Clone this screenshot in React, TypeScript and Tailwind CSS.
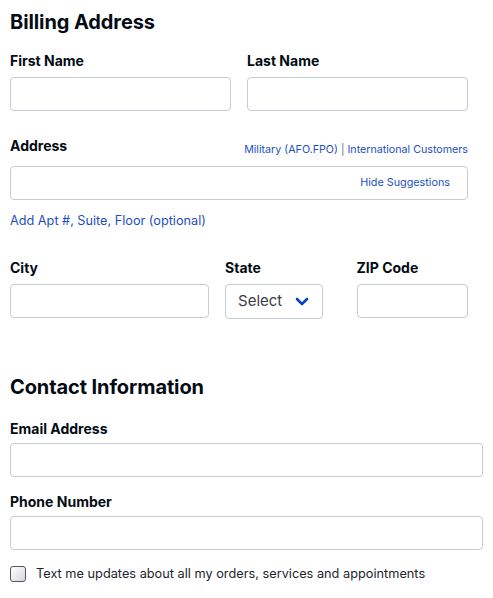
export default function App() {
  const input =
    "block h-[34px] w-full rounded-[4px] border border-[#c5cbd5] bg-white";
  const label = "block text-[14px] leading-[20px] font-bold text-[#040c13]";

  return (
    <div
      className="min-h-screen bg-white pl-[10px] pt-[10px] text-[#040c13]"
      style={{ fontFamily: "Inter, 'Liberation Sans', sans-serif" }}
    >
      <h2 className="text-[20px] leading-[24px] font-bold tracking-[-0.1px]">
        Billing Address
      </h2>

      <div className="mt-[17px] flex w-[458px] gap-[16px]">
        <div className="flex-1">
          <label className={label}>First Name</label>
          <div className={`${input} mt-[6px]`} />
        </div>
        <div className="flex-1">
          <label className={label}>Last Name</label>
          <div className={`${input} mt-[6px]`} />
        </div>
      </div>

      <div className="mt-[25px] w-[458px]">
        <div className="flex items-end justify-between">
          <label className={label}>Address</label>
          <div className="-mb-[2px] text-[10.7px] leading-[16px] text-[#1d4fc2]">
            <span>Military (AFO.FPO)</span>
            <span className="text-[#6b6b80]"> | </span>
            <span>International Customers</span>
          </div>
        </div>
        <div
          className={`${input} mt-[10px] flex items-center justify-end pr-[17px]`}
        >
          <span className="text-[10.8px] text-[#1d4fc2]">Hide Suggestions</span>
        </div>
        <div className="mt-[12px] text-[12.7px] leading-[18px] text-[#1d4fc2]">
          Add Apt #, Suite, Floor (optional)
        </div>
      </div>

      <div className="mt-[28px] flex w-[458px]">
        <div className="w-[200px]">
          <label className={label}>City</label>
          <div className={`${input} mt-[6px]`} />
        </div>
        <div className="ml-[16px] w-[98px]">
          <label className={label}>State</label>
          <div
            className={`${input} mt-[6px] flex h-[35px] items-center justify-between pl-[12px] pr-[13px]`}
          >
            <span className="text-[15px] text-[#3d3d45]">Select</span>
            <svg width="14" height="9" viewBox="0 0 14 9" fill="none">
              <path
                d="M2 2l5 5 5-5"
                stroke="#0046be"
                strokeWidth="2.6"
                strokeLinecap="round"
                strokeLinejoin="round"
              />
            </svg>
          </div>
        </div>
        <div className="ml-[34px] w-[112px]">
          <label className={label}>ZIP Code</label>
          <div className={`${input} mt-[6px]`} />
        </div>
      </div>

      <h2 className="mt-[56px] text-[20px] leading-[24px] font-bold tracking-[-0.1px]">
        Contact Information
      </h2>

      <div className="mt-[20px] w-[473px]">
        <label className={label}>Email Address</label>
        <div className={`${input} mt-[4px]`} />
      </div>

      <div className="mt-[15px] w-[473px]">
        <label className={label}>Phone Number</label>
        <div className={`${input} mt-[4px]`} />
      </div>

      <div className="mt-[15px] flex items-center">
        <div className="h-[16px] w-[16px] rounded-[3px] border border-[#55555a] bg-gradient-to-br from-[#ffffff] to-[#d4d7de]" />
        <span className="ml-[10px] text-[12.75px] leading-[18px] text-[#1d252c]">
          Text me updates about all my orders, services and appointments
        </span>
      </div>
    </div>
  );
}
